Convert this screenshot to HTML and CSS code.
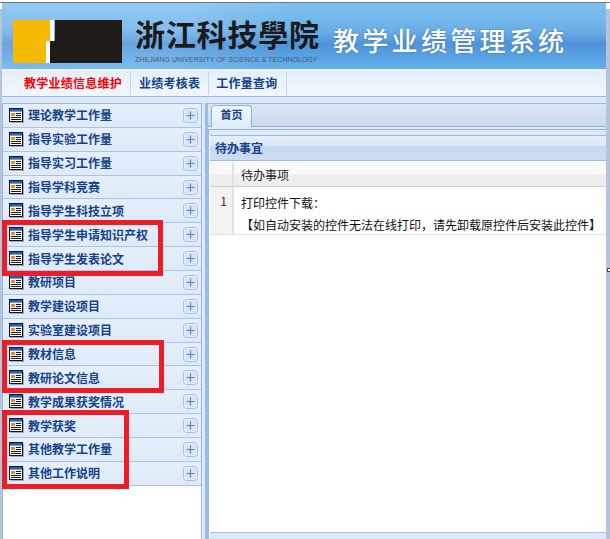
FILE: index.html
```html
<!DOCTYPE html>
<html lang="zh">
<head>
<meta charset="utf-8">
<title>教学业绩管理系统</title>
<link rel="stylesheet" href="styles.css">
</head>
<body>
<svg class="defs" width="0" height="0" aria-hidden="true">
  <symbol id="doc" viewBox="0 0 15 15">
    <rect x="1.5" y="1.5" width="13.5" height="13.5" fill="#a9a9b4"/>
    <rect x="0.5" y="0.5" width="13" height="13" fill="#fff" stroke="#14161f"/>
    <rect x="1" y="1" width="12" height="2.6" fill="#1c62b8"/>
    <rect x="2" y="5" width="4" height="3" fill="#f28a1a"/>
    <path d="M7 5.5h5M7 7.5h5M2 9.5h10M2 11.5h10" stroke="#14161f" stroke-width="1"/>
  </symbol>
  <symbol id="plus" viewBox="0 0 15 15">
    <rect x="0.5" y="0.5" width="14" height="14" rx="3" fill="#e4eefb" stroke="#a6c0e6"/>
    <rect x="2" y="2" width="11" height="11" rx="2" fill="#d5e4f8"/>
    <path d="M3.5 7.5h8M7.5 3.5v8" stroke="#5c86bd" stroke-width="1.2"/>
  </symbol>
</svg>
<div class="page">
  <div class="topline"></div>
  <div class="frame">
    <header class="banner">
      <svg class="logo" width="110" height="43" viewBox="0 0 110 43" aria-hidden="true">
        <path d="M0 0H37V21H33V43H0Z" fill="#f6b904"/>
        <path d="M37 0H41V21H37V43H33V21H37Z" fill="#fff"/>
        <path d="M42 0H109V43H37V21H42Z" fill="#1f1b19"/>
      </svg>
      <div class="school">
        <div class="school-name">浙江科技學院</div>
        <div class="school-en">ZHEJIANG UNIVERSITY OF SCIENCE &amp; TECHNOLOGY</div>
      </div>
      <div class="system">教学业绩管理系统</div>
    </header>
    <nav class="nav">
      <a class="nav-item active">教学业绩信息维护</a>
      <a class="nav-item">业绩考核表</a>
      <a class="nav-item">工作量查询</a>
    </nav>
    <div class="workspace">
      <aside class="side">
        <div class="row"><svg class="ico"><use href="#doc"/></svg><span class="label">理论教学工作量</span><svg class="add"><use href="#plus"/></svg></div>
        <div class="row"><svg class="ico"><use href="#doc"/></svg><span class="label">指导实验工作量</span><svg class="add"><use href="#plus"/></svg></div>
        <div class="row"><svg class="ico"><use href="#doc"/></svg><span class="label">指导实习工作量</span><svg class="add"><use href="#plus"/></svg></div>
        <div class="row"><svg class="ico"><use href="#doc"/></svg><span class="label">指导学科竞赛</span><svg class="add"><use href="#plus"/></svg></div>
        <div class="row"><svg class="ico"><use href="#doc"/></svg><span class="label">指导学生科技立项</span><svg class="add"><use href="#plus"/></svg></div>
        <div class="row"><svg class="ico"><use href="#doc"/></svg><span class="label">指导学生申请知识产权</span><svg class="add"><use href="#plus"/></svg></div>
        <div class="row"><svg class="ico"><use href="#doc"/></svg><span class="label">指导学生发表论文</span><svg class="add"><use href="#plus"/></svg></div>
        <div class="row"><svg class="ico"><use href="#doc"/></svg><span class="label">教研项目</span><svg class="add"><use href="#plus"/></svg></div>
        <div class="row"><svg class="ico"><use href="#doc"/></svg><span class="label">教学建设项目</span><svg class="add"><use href="#plus"/></svg></div>
        <div class="row"><svg class="ico"><use href="#doc"/></svg><span class="label">实验室建设项目</span><svg class="add"><use href="#plus"/></svg></div>
        <div class="row"><svg class="ico"><use href="#doc"/></svg><span class="label">教材信息</span><svg class="add"><use href="#plus"/></svg></div>
        <div class="row"><svg class="ico"><use href="#doc"/></svg><span class="label">教研论文信息</span><svg class="add"><use href="#plus"/></svg></div>
        <div class="row"><svg class="ico"><use href="#doc"/></svg><span class="label">教学成果获奖情况</span><svg class="add"><use href="#plus"/></svg></div>
        <div class="row"><svg class="ico"><use href="#doc"/></svg><span class="label">教学获奖</span><svg class="add"><use href="#plus"/></svg></div>
        <div class="row"><svg class="ico"><use href="#doc"/></svg><span class="label">其他教学工作量</span><svg class="add"><use href="#plus"/></svg></div>
        <div class="row"><svg class="ico"><use href="#doc"/></svg><span class="label">其他工作说明</span><svg class="add"><use href="#plus"/></svg></div>
      </aside>
      <div class="split"></div>
      <main class="main">
        <div class="tabs"><div class="tab">首页</div></div>
        <div class="tab-rule"></div>
        <div class="body">
          <section class="box">
            <h2 class="box-title">待办事宜</h2>
            <div class="grid-head">
              <div class="num-head"></div>
              <div class="col-head">待办事项</div>
            </div>
            <div class="grid-row">
              <div class="num">1</div>
              <div class="cell">
                <p class="line">打印控件下载：</p>
                <p class="line">【如自动安装的控件无法在线打印，请先卸载原控件后安装此控件】</p>
              </div>
            </div>
          </section>
          <div class="foot"></div>
        </div>
      </main>
    </div>
  </div>
  <div class="handle"></div>
  <div class="mark mark-a"></div>
  <div class="mark mark-b"></div>
  <div class="mark mark-c"></div>
</div>
</body>
</html>
```
FILE: styles.css
```css
* { box-sizing: border-box; }
html, body { margin: 0; padding: 0; background: #fff; overflow: hidden; }
.defs { position: absolute; }
.page {
  position: relative;
  width: 610px;
  height: 539px;
  overflow: hidden;
  font-family: "Noto Sans CJK SC", "Liberation Sans", sans-serif;
  font-size: 12px;
  display: flex;
  flex-direction: column;
  background: linear-gradient(#fff 9px, #b4c4da 9px);
}
.topline { height: 3px; flex: none; border-bottom: 1px solid #777; background: #fff; }
.frame {
  flex: 1;
  min-height: 0;
  display: flex;
  flex-direction: column;
  margin: 0 4px 0 2px;
  background: #dfe8f6;
}
.banner {
  height: 66px;
  flex: none;
  display: flex;
  align-items: flex-start;
  padding: 17px 0 0 11px;
  background:
    linear-gradient(115deg, rgba(255,255,255,.16) 0 30%, rgba(255,255,255,0) 48%),
    linear-gradient(#7cc0f0 0, #6db0e8 40%, #4f93d8 62%, #62b0ec 100%);
}
.logo { flex: none; display: block; }
.school { margin-left: 12px; margin-top: -3px; width: 190px; }
.school-name {
  font-size: 30px;
  line-height: 32px;
  font-weight: 700;
  color: #1a1a1a;
  letter-spacing: .8px;
  white-space: nowrap;
}
.school-en {
  margin-top: 6px;
  font-family: "Liberation Sans", sans-serif;
  font-size: 7px;
  line-height: 9px;
  color: #4b5d70;
  white-space: nowrap;
  letter-spacing: .05px;
}
.system {
  margin-left: 8px;
  margin-top: 3px;
  font-size: 26px;
  line-height: 34px;
  color: #fff;
  font-weight: 500;
  letter-spacing: 3.3px;
  white-space: nowrap;
  text-shadow: 0 0 2px #3b6ea8;
}
.nav {
  height: 28px;
  flex: none;
  display: flex;
  align-items: center;
  padding: 0 0 0 22px;
  border-bottom: 1px solid #99bbe8;
  background: linear-gradient(#f4f9fe 0, #e3eefb 3px, #e9f2fc 10px, #f0f6fd 26px);
}
.nav-item {
  font-weight: 700;
  font-size: 12px;
  letter-spacing: .25px;
  color: #15428b;
  padding: 0 8px;
  line-height: 24px;
  border-right: 1px solid #c4d6ee;
  white-space: nowrap;
}
.nav-item.active { color: #f00; padding-right: 8px; padding-left: 0; }
.nav-item:last-child { margin-left: -1px; }
.workspace {
  flex: 1;
  min-height: 0;
  display: flex;
  margin-top: 6px;
}
.side {
  width: 200px;
  flex: none;
  border: 1px solid #99bbe8;
  border-bottom: 0;
  background: #fff;
}
.row {
  height: 23.87px;
  display: flex;
  align-items: center;
  padding: 0 3px 0 6px;
  background: linear-gradient(#e6eff9, #deeaf8);
  border-bottom: 1px solid #a9c4e8;
}
.ico { width: 15px; height: 15px; flex: none; }
.label {
  flex: 1;
  margin-left: 4px;
  font-weight: 700;
  color: #15428b;
  white-space: nowrap;
  line-height: 16px;
}
.add { width: 15px; height: 15px; flex: none; }
.split { width: 5px; flex: none; border-right: 2px solid #99bbe8; background: #dfe8f6; }
.main {
  flex: 1;
  min-width: 0;
  display: flex;
  flex-direction: column;
  border-top: 1px solid #99bbe8;
  border-left: 1px solid #99bbe8;
}
.tabs {
  height: 23px;
  flex: none;
  padding: 1px 0 0 3px;
  background: linear-gradient(#dbe6f6, #cbd8eb);
  border-bottom: 1px solid #8db2e3;
}
.tab {
  width: 41px;
  height: 22px;
  border: 1px solid #8db2e3;
  border-bottom: 0;
  border-radius: 4px 4px 0 0;
  background: linear-gradient(#f2f7fd, #deecfd);
  color: #15428b;
  font-weight: 700;
  font-size: 11px;
  line-height: 17px;
  text-align: center;
}
.tab-rule { height: 3px; flex: none; background: #dfe8f6; border-bottom: 1px solid #8db2e3; }
.body {
  flex: 1;
  min-height: 0;
  display: flex;
  flex-direction: column;
  border-left: 1px solid #99bbe8;
  padding: 5px 0 0 1px;
  background: linear-gradient(#dfe8f6 5px, #fff 5px);
}
.box { flex: 1; min-height: 0; background: #fff; border-top: 1px solid #99bbe8; }
.box-title {
  margin: 0;
  height: 25px;
  padding: 0 0 0 5px;
  font-size: 12px;
  line-height: 23px;
  font-weight: 700;
  color: #15428b;
  background: linear-gradient(#e6eef9 0, #dce8f8 40%, #c6d8f1 42%, #ccdcf3 100%);
  border-bottom: 1px solid #99bbe8;
}
.grid-head {
  margin-top: 1px;
  height: 25px;
  display: flex;
  background: linear-gradient(#f9f9f9 0, #f9f9f9 50%, #efefef 52%, #ececec 100%);
  border-bottom: 1px solid #cfcfcf;
}
.num-head { width: 24px; flex: none; border-right: 2px solid #e2e2e2; }
.col-head { padding-left: 7px; line-height: 26px; color: #222; font-size: 12px; }
.grid-row { display: flex; height: 48px; border-bottom: 1px solid #e4e4e4; }
.num {
  width: 24px;
  flex: none;
  background: #f2f2f2;
  border-right: 2px solid #e2e2e2;
  text-align: right;
  padding: 6px 5px 0 0;
  line-height: 16px;
  color: #333;
}
.cell { padding: 5px 0 0 7px; white-space: nowrap; }
.line { margin: 0; line-height: 22px; color: #111; font-size: 12px; }
.foot { height: 7px; flex: none; background: #dfe8f6; border-top: 1px solid #a9c4e8; }
.handle {
  position: absolute;
  left: 607px;
  top: 268px;
  width: 5px;
  height: 4px;
  background: #fff;
  border: 1px solid #444;
}
.mark { position: absolute; border: 5px solid #ee1c25; }
.mark-a { left: 2px; top: 220px; width: 161px; height: 56px; }
.mark-b { left: 2px; top: 340px; width: 162px; height: 53px; }
.mark-c { left: 2px; top: 410px; width: 127px; height: 79px; }
```
